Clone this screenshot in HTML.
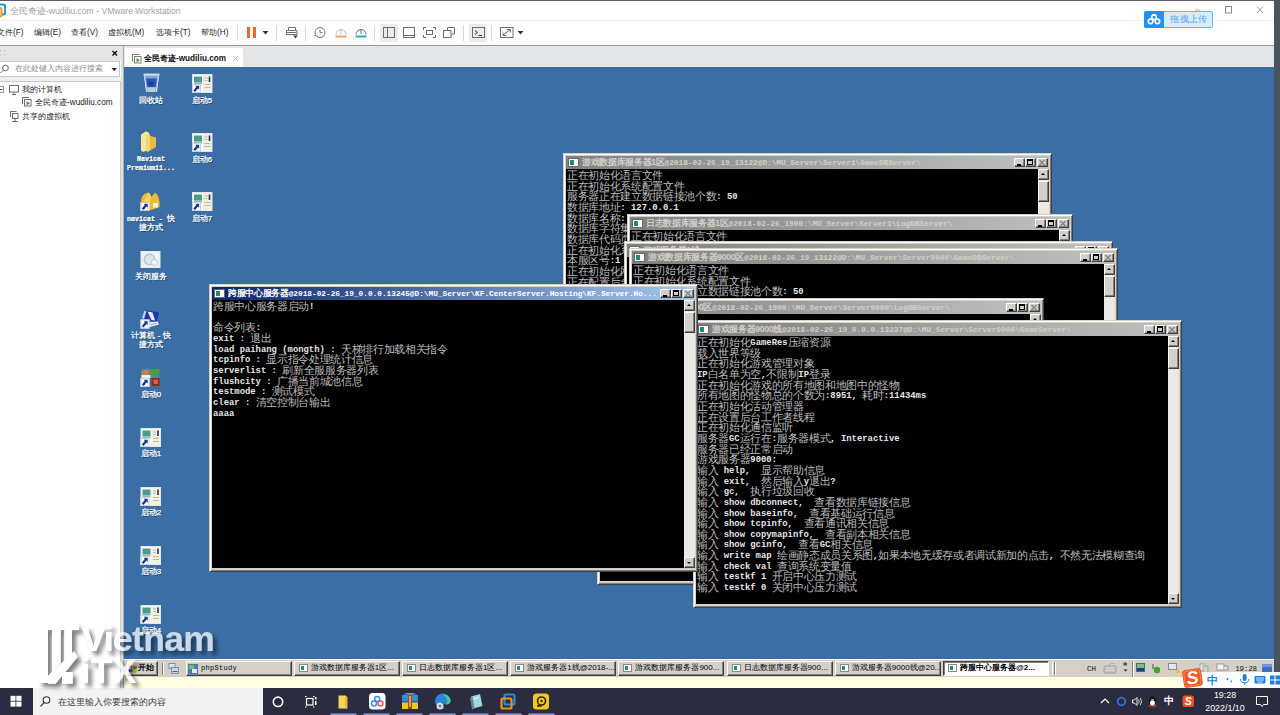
<!DOCTYPE html>
<html lang="zh">
<head>
<meta charset="utf-8">
<title>VMware Workstation</title>
<style>
*{box-sizing:border-box;margin:0;padding:0}
html,body{width:1280px;height:715px;overflow:hidden;background:#fff}
body{position:relative;font-family:"Liberation Sans",sans-serif;font-size:11px;color:#222}
.abs{position:absolute}
/* ---------- host frame ---------- */
#topline{left:0;top:0;width:1280px;height:1px;background:#5a5f66}
#rightedge{left:1274px;top:0;width:6px;height:688px;background:#4a545f}
#title{left:10px;top:3px;height:16px;line-height:16px;font-size:8.6px;color:#a3a3a3;white-space:nowrap}
#tsep{left:0;top:20px;width:1274px;height:1px;background:#f1f1f1}
.menu{top:25px;height:16px;line-height:16px;font-size:8.2px;color:#1e1e1e;white-space:nowrap}
.vsep{top:25px;width:1px;height:15px;background:#dcdcdc}
#tbline{left:0;top:45px;width:1274px;height:1px;background:#9b9b9b}
#tabrow{left:122px;top:46px;width:1152px;height:21px;background:#e4e5e7}
#tab{left:125px;top:48px;width:118px;height:19px;background:#fff;border-radius:2px 2px 0 0}
#tabtxt{left:144px;top:51px;height:15px;line-height:15px;font-size:8.2px;font-weight:bold;color:#111;white-space:nowrap}
/* ---------- sidebar ---------- */
#sbhead{left:0;top:46px;width:122px;height:15px;background:#e4e5e7}
#sbsearch{left:-1px;top:61px;width:121px;height:16px;background:#fff;border:1px solid #c9c9c9}
#sbgap{left:0;top:77px;width:122px;height:4px;background:#eeeff0}
#sbtree{left:-1px;top:81px;width:122px;height:608px;background:#fff;border:1px solid #c9c9c9}
#sbedge{left:121px;top:46px;width:3px;height:642px;background:#e1e2e4;border-right:1px solid #a9abae}
.tree{font-size:8.2px;color:#1a1a1a;height:13px;line-height:13px;white-space:nowrap}
/* ---------- guest ---------- */
#vm{left:125px;top:67px;width:1149px;height:593px;background:#3a6ea5;overflow:hidden}
#gtask{left:124px;top:659px;width:1150px;height:18px;background:#d4d0c8;border-top:1px solid #fff}
#ystrip{left:124px;top:677px;width:1150px;height:11px;background:#fffde4}
.gbtn{position:absolute;top:661px;height:15px;background:#d4d0c8;border:1px solid;border-color:#fff #404040 #404040 #fff;box-shadow:inset -1px -1px #808080;font-size:8px;line-height:12px;white-space:nowrap;overflow:hidden;color:#000;padding-left:16px}
.gbtn .gi{position:absolute;left:4px;top:2px;width:9px;height:8px;background:#fff;border:1px solid #8a8a8a}
.gbtn .gi:after{content:"";position:absolute;left:1px;top:1px;width:3px;height:4px;background:#2a8a7a}
.dic{position:absolute;width:60px;text-align:center;color:#fff;font-size:8px;line-height:9.3px;height:9.3px;white-space:nowrap;text-shadow:0.7px 0.7px 0 rgba(0,0,0,.5);-webkit-text-stroke:0.25px #fff}
.mono{font-family:"Liberation Mono",monospace;font-size:6.7px;font-weight:bold}
.dic.mono{letter-spacing:0}
/* ---------- classic console windows ---------- */
.win{position:absolute;background:#d4d0c8;border:1px solid;border-color:#d4d0c8 #404040 #404040 #d4d0c8;box-shadow:inset 1px 1px #fff,inset -1px -1px #808080}
.win .tb{position:absolute;left:2px;top:2px;right:2px;height:13px;background:linear-gradient(90deg,#808080,#c0c0c0);overflow:hidden;white-space:nowrap}
.win.act .tb{background:linear-gradient(90deg,#0a246a,#a6caf0)}
.win .ti{position:absolute;left:2px;top:2px;width:11px;height:9px;background:#fff;border:1px solid #6a6a6a}
.win .ti:after{content:"";position:absolute;left:1px;top:1px;width:4px;height:5px;background:#1f8a78}
.win .tt{position:absolute;left:16px;top:0;height:13px;line-height:13px;font-family:"Liberation Mono",monospace;font-weight:bold;font-size:7.78px;color:#d4d0c8}
.win .tt em{font-style:normal;font-family:"Liberation Sans",sans-serif;font-size:8.67px;font-weight:bold;letter-spacing:-0.33px}
.win.act .tt{color:#fff}
.win .bt{position:absolute;top:2px;width:11px;height:9px;background:#d4d0c8;border:1px solid;border-color:#fff #404040 #404040 #fff;box-shadow:inset -1px -1px #808080}
.win .bt.mn{right:24px}.win .bt.mx{right:13px}.win .bt.cl{right:1px}
.win .bt svg{position:absolute;left:-1px;top:-1px}
.win .bt.mn u{position:absolute;left:2px;top:5px;width:4px;height:1.5px;background:#000}
.win .bt.mx u{position:absolute;left:1px;top:0px;width:6px;height:6px;border:1px solid #000;border-top-width:2px}
.win .cli{position:absolute;left:2px;top:15px;right:13px;bottom:3px;background:#000;overflow:hidden}
.win .txt{position:absolute;top:1px;white-space:nowrap}
.ln{height:10.667px;line-height:10.667px;white-space:nowrap;font-size:0}
.ln i,.ln b{display:inline-block;height:10.667px;overflow:visible;vertical-align:top;white-space:nowrap}
.ln i{font-style:normal;font-size:10.667px;letter-spacing:-0.333px;color:#bdbdbd;font-family:"Liberation Sans",sans-serif;font-weight:normal}
.ln b{font-family:"Liberation Mono",monospace;font-weight:bold;font-size:8.89px;color:#e6e6e6;position:relative;top:1px}
.win .sb{position:absolute;right:2px;top:15px;width:11px;bottom:3px;background:#ebe9e4}
.win .sa{position:absolute;left:0;width:11px;height:11px;background:#d4d0c8;border:1px solid;border-color:#fff #404040 #404040 #fff;box-shadow:inset -1px -1px #808080}
.win .sa.up{top:0}.win .sa.dn{bottom:0}
.win .sa:after{content:"";position:absolute;left:2px;top:3px;border:2.5px solid transparent}
.win .sa.up:after{border-bottom-color:#000;border-top-width:0}
.win .sa.dn:after{border-top-color:#000;border-bottom-width:0;top:4px}
.win .th{position:absolute;left:0;width:11px;background:#d4d0c8;border:1px solid;border-color:#fff #404040 #404040 #fff;box-shadow:inset -1px -1px #808080}
/* ---------- host taskbar ---------- */
#htask{left:0;top:688px;width:1280px;height:27px;background:#2b2c3f}
#hsearch{left:33px;top:688px;width:230px;height:27px;background:#f3f3f3}
#hsearchtxt{left:58px;top:694px;height:16px;line-height:16px;font-size:9.4px;color:#3c3c3c;white-space:nowrap}
.hu{top:713px;height:2px;background:#8ea2d8}
.htxt{color:#fff;font-size:10.5px;white-space:nowrap;text-align:center}
</style>
</head>
<body>
<!-- host title bar -->
<div class="abs" id="title">全民奇迹-wudiliu.com - VMware Workstation</div>
<div class="abs" id="tsep"></div>
<!-- menu -->
<div class="abs menu" style="left:-3px">文件(F)</div>
<div class="abs menu" style="left:34px">编辑(E)</div>
<div class="abs menu" style="left:71px">查看(V)</div>
<div class="abs menu" style="left:108px">虚拟机(M)</div>
<div class="abs menu" style="left:156px">选项卡(T)</div>
<div class="abs menu" style="left:201px">帮助(H)</div>
<svg class="abs" style="left:230px;top:20px" width="300" height="25" viewBox="230 20 300 25" fill="none" stroke="#6e6e6e" stroke-width="1">
<g stroke="#dadada"><path d="M237.5 25V41M276.5 25V41M305.5 25V41M374.5 25V41M463.5 25V41M491.5 25V41"/></g>
<rect x="380" y="24" width="18" height="18" fill="#ebebed" stroke="none"/>
<rect x="469" y="24" width="18" height="18" fill="#ebebed" stroke="none"/>
<g stroke="none" fill="#f26522"><rect x="247" y="27" width="3" height="11"/><rect x="253" y="27" width="3" height="11"/></g>
<path d="M262.5 31h6l-3 3.5z" fill="#333" stroke="none"/>
<!-- printer-like -->
<path d="M288.5 30.5v-3h7v3M286.5 34.5v-4h10.5v4h-10.5zM286.5 32.5h10"/>
<path d="M293 35.5h5l-2.5 3z" fill="#444" stroke="none"/>
<!-- clocks -->
<circle cx="320" cy="32.5" r="5" /><path d="M320 29.5v3.2h2.6"/><path d="M314 35.5h3.5" stroke="#f08a5a"/>
<path d="M336 34.5a5 5 0 0 1 10 0" stroke="#b9b9b9"/><path d="M341 30v4" stroke="#b9b9b9"/><path d="M335.5 36.5h11" stroke="#f39a6e" stroke-width="2"/>
<path d="M356 34.5a5 5 0 0 1 10 0" stroke="#6d6d6d"/><path d="M361 30v4" stroke="#3b6fc0"/><path d="M355.5 36.5h11" stroke="#1cb3c8" stroke-width="2"/>
<!-- layout icons -->
<rect x="383.5" y="27.5" width="11" height="10"/><path d="M387.5 27.5v10"/>
<rect x="403.5" y="27.5" width="11" height="10"/><path d="M403.5 35.5h11"/>
<path d="M423.5 30v-2.5h2.5M433 27.500h2.500v2.500M435.500 35v2.500h-2.500M426 37.500h-2.500v-2.500"/><rect x="426.500" y="30.500" width="6" height="4"/>
<path d="M447.500 30.500v-3h7v6.500h-3"/><rect x="443.500" y="30.500" width="7.500" height="7"/>
<rect x="472.500" y="27.500" width="12" height="10"/><path d="M475 30.500l2.500 2l-2.500 2M478.500 35.500h3.500" stroke="#333"/>
<rect x="500.500" y="27.500" width="12.500" height="10"/><path d="M503 35l7-5M507 29.500h3.500v3M503 32.500v3h3.500"/>
<path d="M517.500 31h6l-3 3.500z" fill="#333" stroke="none"/>
</svg>

<div class="abs" id="tbline"></div>
<div class="abs" id="tabrow"></div>
<div class="abs" id="tab"></div>
<div class="abs" id="tabtxt">全民奇迹-wudiliu.com</div>
<!--TABICONS-->
<!-- sidebar -->
<div class="abs" id="sbhead"></div>
<div class="abs" id="sbgap"></div>
<div class="abs" id="sbtree"></div>
<div class="abs" id="sbsearch"></div>
<div class="abs" id="sbedge"></div>
<div class="abs" style="left:15px;top:62px;height:14px;line-height:14px;font-size:8px;color:#8d8d8d;white-space:nowrap">在此处键入内容进行搜索</div>
<div class="abs tree" style="left:22px;top:83px">我的计算机</div>
<div class="abs tree" style="left:35px;top:96px">全民奇迹-wudiliu.com</div>
<div class="abs tree" style="left:22px;top:110px">共享的虚拟机</div>
<!-- title icon (cut at left) -->
<svg class="abs" style="left:0;top:3px" width="8" height="15" viewBox="0 0 8 15">
<rect x="-6" y="1.500" width="11" height="10" rx="1.500" fill="none" stroke="#1c9ad6" stroke-width="2"/>
<rect x="-8" y="5" width="9.500" height="8.500" rx="1.500" fill="#fff" stroke="#f39a1e" stroke-width="2"/>
</svg>
<!-- window controls -->
<svg class="abs" style="left:1190px;top:3px" width="80" height="16" viewBox="1190 3 80 16" fill="none" stroke="#8a8a8a" stroke-width="1">
<rect x="1225.500" y="6.500" width="6" height="6.500"/>
<path d="M1257 6.500l6 6.500M1263 6.500l-6 6.500" stroke="#9a9a9a"/>
<path d="M1195 10.500q2.500-1.500 5 0" stroke="#b0b0b0"/>
</svg>
<!-- baidu upload widget -->
<div class="abs" style="left:1144px;top:11px;width:69px;height:17px;background:#d6edff;border:1px solid #6db6f2;border-radius:2px"></div>
<div class="abs" style="left:1144px;top:11px;width:20px;height:17px;background:#2192f2;border-radius:2px 0 0 2px"></div>
<svg class="abs" style="left:1146px;top:13px" width="16" height="13" viewBox="0 0 16 13" fill="none" stroke="#fff" stroke-width="1.600">
<circle cx="8" cy="4.200" r="2.300"/><circle cx="4.600" cy="8.300" r="2.300"/><circle cx="11.400" cy="8.300" r="2.300"/>
</svg>
<div class="abs" style="left:1166px;top:12px;width:46px;height:15px;line-height:15px;text-align:center;font-size:8.500px;color:#5aa3e6;white-space:nowrap;letter-spacing:0.300px">拖拽上传</div>
<!-- tab icon + close -->
<svg class="abs" style="left:130px;top:51px" width="116" height="16" viewBox="130 50 116 16" fill="none" stroke="#7c7c7c" stroke-width="1">
<path d="M132.500 60.500v-7h7"/><rect x="134.500" y="55.500" width="6.500" height="6.500" fill="#fff"/><path d="M136.500 57l3.500 2.200l-3.500 2.200z" fill="#3aa53a" stroke="none"/>
<path d="M233 55l5 5M238 55l-5 5" stroke="#c4c4c4"/>
</svg>
<!-- sidebar icons -->
<svg class="abs" style="left:0;top:46px" width="122" height="80" viewBox="0 46 122 80" fill="none" stroke="#6e6e6e" stroke-width="1">
<g fill="#c9c9c9" stroke="none"><rect x="0" y="50" width="1.500" height="1.500"/><rect x="4" y="50" width="1.500" height="1.500"/><rect x="0" y="54" width="1.500" height="1.500"/><rect x="4" y="54" width="1.500" height="1.500"/></g>
<path d="M112.500 51l4.500 4.500M117 51l-4.500 4.500" stroke="#111" stroke-width="1.400"/>
<circle cx="5.500" cy="68" r="2.800" stroke="#666"/><path d="M3.500 70l-3 3" stroke="#666"/>
<path d="M111.500 68h5.500l-2.750 3z" fill="#222" stroke="none"/>
<rect x="-2.500" y="86.500" width="6" height="6" stroke="#9a9a9a"/><path d="M-1 89.500h3.500" stroke="#555"/>
<rect x="9.500" y="85.500" width="9" height="6.500"/><path d="M12 94.500h4M14 92v2.500"/>
<path d="M22.500 104v-6.500h6.500"/><rect x="24.500" y="99.500" width="6.500" height="6.500" fill="#fff"/><path d="M26.500 101l3.500 2.200l-3.500 2.200z" fill="#3aa53a" stroke="none"/>
<path d="M10.500 117v-5.500h6"/><rect x="12.500" y="113.500" width="5.500" height="5" fill="#fff"/><path d="M12 121.500h6M15 118.500v3"/>
</svg>

<!-- guest desktop -->
<div class="abs" id="vm">
<svg class="abs" style="left:0;top:0" width="120" height="594" viewBox="125 67 120 594">
<defs>
<g id="sc"><rect x="0" y="0" width="9" height="9" fill="#fff"/><rect x="0.500" y="0.500" width="8" height="8" fill="none" stroke="#c9d2dc" stroke-width="1"/><path d="M2.200 7.300L5.500 3.200" stroke="#17348c" stroke-width="2.200" fill="none"/><path d="M3.200 1.800h4v4z" fill="#17348c"/></g>
<g id="bat">
<rect x="0" y="0" width="20.500" height="19" fill="#dfe7ee"/>
<rect x="1" y="1" width="10" height="17" fill="#fbfcfd"/>
<rect x="2" y="2.500" width="8" height="6" fill="#4b9a8c"/>
<rect x="2" y="8.500" width="8" height="2" fill="#8fbfb6"/>
<rect x="11.500" y="1" width="8" height="17" fill="#f3f0de"/>
<rect x="16.700" y="2.500" width="1.600" height="5.500" fill="#22365a"/>
<path d="M12.500 4h3M12.500 6.500h3M12.500 10.500h6M12.500 13.500h6" stroke="#bdbba8" stroke-width="1"/>
<use href="#sc" x="0" y="10"/>
</g>
</defs>

<g transform="translate(143.500 73.500)">
<path d="M0.300 1.500L15.700 1.500L13.200 18.500L2.800 18.500Z" fill="#7aa3d4"/>
<path d="M0 0h16v2.300h-16z" fill="#c8d8e8"/>
<path d="M2.600 5L13.400 5L12.300 13.500L3.700 13.500z" fill="#2b58b6"/>
<path d="M5 8h5.500l-.5 4h-4.500z" fill="#1c3f9a"/>
<path d="M3.700 14h8.600l-.6 4.500h-7.400z" fill="#bccbd6"/>
<path d="M1 2.300l2 16M15 2.300l-2 16" stroke="#dbe7f2" stroke-width="1" fill="none"/>
</g>
<g transform="translate(140.500 131)">
<path d="M0.500 3.500L5.500 0.300L8.500 1.800L8.500 18.500L2.500 21L0.500 19.500z" fill="#f8e69a"/>
<path d="M6 4L15.500 6.500L15.500 16L7 21L6 20z" fill="#e8bb43"/>
<path d="M6 4L9.500 3L9.500 19.500L6 20.500z" fill="#f4d56e"/>
</g>
<g transform="translate(140.500 192)">
<path d="M0.500 10C0.500 4 4 0.500 8.500 0.500L11 5L14.500 0.500C18 3 19.500 8 19 15L11 18L0.500 15z" fill="#efb92f"/>
<path d="M8.500 0.500L11 5L9 12L3 9z" fill="#f6d25e"/>
<rect x="12.500" y="11" width="5" height="4.500" fill="#fff7d8"/>
<use href="#sc" x="0" y="10"/>
</g>
<g transform="translate(140.500 251)">
<rect x="0" y="0" width="20" height="17" fill="#e3e9ed"/>
<rect x="1" y="1" width="18" height="15" fill="#eef2f4"/>
<circle cx="9" cy="8.500" r="5.200" fill="#dbe7ef" stroke="#b5c7d4" stroke-width="1.500"/>
<circle cx="14" cy="11.500" r="3" fill="#f5f7f8" stroke="#b9c4cc" stroke-width="1"/>
</g>
<g transform="translate(140.500 309)">
<path d="M5 1L18.500 3.500L16 13L3.500 10z" fill="#1b37b4"/>
<path d="M7 2.500L12 3.500L14.500 11.500L11 11z" fill="#e6eefc"/>
<path d="M4 1.800l-2.500 7 2 1.500L6 2z" fill="#c7d2e2"/>
<path d="M8 13.500l9-1 1.500 3-9 2.500z" fill="#eef1f4"/>
<path d="M10 15.500l6-1" stroke="#9aa5b5" stroke-width="1"/>
<use href="#sc" x="0" y="10.500"/>
</g>
<g transform="translate(140.500 368)">
<rect x="1" y="1" width="18" height="9" fill="#5b7fb0"/>
<path d="M9 1.500L19 0.500L18 8.500L9 9z" fill="#4e9c42"/>
<path d="M1 3l7-1.500v6L1 9z" fill="#d98a2e" opacity="0.800"/>
<rect x="1" y="7" width="9" height="3" fill="#e9eef2"/>
<rect x="11" y="10" width="8" height="8" fill="#8b2a22"/>
<rect x="13" y="11.500" width="4.500" height="4.500" fill="#e2573a"/>
<use href="#sc" x="0" y="10"/>
</g>
<use href="#bat" x="140.500" y="428"/>
<use href="#bat" x="140.500" y="487"/>
<use href="#bat" x="140.500" y="546"/>
<use href="#bat" x="140.500" y="605"/>
<use href="#bat" x="192" y="74"/>
<use href="#bat" x="192" y="133"/>
<use href="#bat" x="192" y="192"/>
</svg>
<div class="dic" style="left:-4px;top:28.5px">回收站</div>
<div class="dic mono" style="left:-4px;top:88.0px">Navicat</div>
<div class="dic mono" style="left:-4px;top:97.3px">Premium11...</div>
<div class="dic" style="left:-4px;top:147.0px"><span class="mono">navicat - </span>快</div>
<div class="dic" style="left:-4px;top:156.3px">捷方式</div>
<div class="dic" style="left:-4px;top:205.0px">关闭服务</div>
<div class="dic" style="left:-4px;top:264.0px">计算机 <span class="mono">-</span> 快</div>
<div class="dic" style="left:-4px;top:273.3px">捷方式</div>
<div class="dic" style="left:-4px;top:323.0px">启动0</div>
<div class="dic" style="left:-4px;top:382.0px">启动1</div>
<div class="dic" style="left:-4px;top:441.0px">启动2</div>
<div class="dic" style="left:-4px;top:500.0px">启动3</div>
<div class="dic" style="left:-4px;top:559.0px">启动4</div>
<div class="dic" style="left:47px;top:28.5px">启动5</div>
<div class="dic" style="left:47px;top:88.0px">启动6</div>
<div class="dic" style="left:47px;top:147.0px">启动7</div>
</div>
<div class="abs" style="left:0;top:0;width:0;height:0">
<div class="win" style="left:563px;top:153px;width:489px;height:288px;z-index:1">
<div class="tb"><span class="ti"></span><span class="tt"><em>游戏数据库服务器1区</em>@2018-02-26_19_13122@D:\MU_Server\Server1\GameDBServer\</span><span class="bt mn"><u></u></span><span class="bt mx"><u></u></span><span class="bt cl"><svg width="10" height="9" viewBox="0 0 10 9"><path d="M2.5 2 L7.5 7 M7.5 2 L2.5 7" stroke="#808080" stroke-width="1.2"/></svg></span></div>
<div class="cli"><div class="txt" style="left:1px">
<div class="ln"><i style="width:96.00px">正在初始化语言文件</i></div>
<div class="ln"><i style="width:117.34px">正在初始化系统配置文件</i></div>
<div class="ln"><i style="width:149.34px">服务器正在建立数据链接池个数</i><b style="width:21.33px">:&nbsp;50</b></div>
<div class="ln"><i style="width:53.34px">数据库地址</i><b style="width:58.67px">:&nbsp;127.0.0.1</b></div>
<div class="ln"><i style="width:53.34px">数据库名称</i><b style="width:58.67px">:&nbsp;mu_game_1</b></div>
<div class="ln"><i style="width:64.00px">数据库字符集</i><b style="width:32.00px">:&nbsp;utf8</b></div>
<div class="ln"><i style="width:64.00px">数据库代码页</i><b style="width:37.33px">:&nbsp;65001</b></div>
<div class="ln"><i style="width:96.00px">正在初始化系统参数</i></div>
<div class="ln"><i style="width:42.67px">本服区号</i><b style="width:10.67px">:1</b></div>
<div class="ln"><i style="width:74.67px">正在初始化网络</i></div>
<div class="ln"><i style="width:85.34px">正在配置后台线程</i></div>
<div class="ln"><i style="width:42.67px">正在启动</i></div>
</div></div>
<div class="sb"><span class="sa up"></span><span class="th" style="top:12px;height:21px"></span><span class="sa dn"></span></div>
</div>
<div class="win" style="left:627px;top:214px;width:446px;height:288px;z-index:2">
<div class="tb"><span class="ti"></span><span class="tt"><em>日志数据库服务器1区</em>@2018-02-26_1900:\MU_Server\Server1\LogDBServer\</span><span class="bt mn"><u></u></span><span class="bt mx"><u></u></span><span class="bt cl"><svg width="10" height="9" viewBox="0 0 10 9"><path d="M2.5 2 L7.5 7 M7.5 2 L2.5 7" stroke="#808080" stroke-width="1.2"/></svg></span></div>
<div class="cli"><div class="txt" style="left:1px">
<div class="ln"><i style="width:96.00px">正在初始化语言文件</i></div>
<div class="ln"><i style="width:117.34px">正在初始化系统配置文件</i></div>
</div></div>
<div class="sb"><span class="sa up"></span><span class="th" style="top:12px;height:21px"></span><span class="sa dn"></span></div>
</div>
<div class="win" style="left:624px;top:241px;width:489px;height:288px;z-index:3">
<div class="tb"><span class="ti"></span><span class="tt"><em>游戏服务器1线</em>@2018-02-26_19_0.0.0.13231@D:\MU_Server\Server1\GameServer\</span><span class="bt mn"><u></u></span><span class="bt mx"><u></u></span><span class="bt cl"><svg width="10" height="9" viewBox="0 0 10 9"><path d="M2.5 2 L7.5 7 M7.5 2 L2.5 7" stroke="#808080" stroke-width="1.2"/></svg></span></div>
<div class="cli"><div class="txt" style="left:1px">
</div></div>
<div class="sb"><span class="sa up"></span><span class="th" style="top:12px;height:21px"></span><span class="sa dn"></span></div>
</div>
<div class="win" style="left:629px;top:248px;width:489px;height:288px;z-index:4">
<div class="tb"><span class="ti"></span><span class="tt"><em>游戏数据库服务器9000区</em>@2018-02-26_19_13122@D:\MU_Server\Server9000\GameDBServer\</span><span class="bt mn"><u></u></span><span class="bt mx"><u></u></span><span class="bt cl"><svg width="10" height="9" viewBox="0 0 10 9"><path d="M2.5 2 L7.5 7 M7.5 2 L2.5 7" stroke="#808080" stroke-width="1.2"/></svg></span></div>
<div class="cli"><div class="txt" style="left:1px">
<div class="ln"><i style="width:96.00px">正在初始化语言文件</i></div>
<div class="ln"><i style="width:117.34px">正在初始化系统配置文件</i></div>
<div class="ln"><i style="width:149.34px">服务器正在建立数据链接池个数</i><b style="width:21.33px">:&nbsp;50</b></div>
<div class="ln"><i style="width:53.34px">数据库地址</i><b style="width:58.67px">:&nbsp;127.0.0.1</b></div>
</div></div>
<div class="sb"><span class="sa up"></span><span class="th" style="top:12px;height:21px"></span><span class="sa dn"></span></div>
</div>
<div class="win" style="left:597px;top:298px;width:447px;height:287px;z-index:5">
<div class="tb"><span class="ti"></span><span class="tt"><em>日志数据库服务器9000区</em>@2018-02-26_1900:\MU_Server\Server9000\LogDBServer\</span><span class="bt mn"><u></u></span><span class="bt mx"><u></u></span><span class="bt cl"><svg width="10" height="9" viewBox="0 0 10 9"><path d="M2.5 2 L7.5 7 M7.5 2 L2.5 7" stroke="#808080" stroke-width="1.2"/></svg></span></div>
<div class="cli"><div class="txt" style="left:1px">
<div class="ln"><i style="width:96.00px">正在初始化语言文件</i></div>
</div></div>
<div class="sb"><span class="sa up"></span><span class="th" style="top:12px;height:21px"></span><span class="sa dn"></span></div>
</div>
<div class="win" style="left:693px;top:320px;width:489px;height:288px;z-index:6">
<div class="tb"><span class="ti"></span><span class="tt"><em>游戏服务器9000线</em>@2018-02-26_19_0.0.0.13237@D:\MU_Server\Server9000\GameServer\</span><span class="bt mn"><u></u></span><span class="bt mx"><u></u></span><span class="bt cl"><svg width="10" height="9" viewBox="0 0 10 9"><path d="M2.5 2 L7.5 7 M7.5 2 L2.5 7" stroke="#808080" stroke-width="1.2"/></svg></span></div>
<div class="cli"><div class="txt" style="left:1px">
<div class="ln"><i style="width:53.34px">正在初始化</i><b style="width:37.33px">GameRes</b><i style="width:42.67px">压缩资源</i></div>
<div class="ln"><i style="width:64.00px">载入世界等级</i></div>
<div class="ln"><i style="width:117.34px">正在初始化游戏管理对象</i></div>
<div class="ln"><b style="width:10.67px">IP</b><i style="width:53.34px">白名单为空</i><b style="width:5.33px">,</b><i style="width:32.00px">不限制</i><b style="width:10.67px">IP</b><i style="width:21.33px">登录</i></div>
<div class="ln"><i style="width:202.67px">正在初始化游戏的所有地图和地图中的怪物</i></div>
<div class="ln"><i style="width:128.00px">所有地图的怪物总的个数为</i><b style="width:37.33px">:8951,&nbsp;</b><i style="width:21.33px">耗时</i><b style="width:42.67px">:11434ms</b></div>
<div class="ln"><i style="width:106.67px">正在初始化活动管理器</i></div>
<div class="ln"><i style="width:117.34px">正在设置后台工作者线程</i></div>
<div class="ln"><i style="width:96.00px">正在初始化通信监听</i></div>
<div class="ln"><i style="width:32.00px">服务器</i><b style="width:10.67px">GC</b><i style="width:32.00px">运行在</i><b style="width:5.33px">:</b><i style="width:53.34px">服务器模式</i><b style="width:69.34px">,&nbsp;Interactive</b></div>
<div class="ln"><i style="width:96.00px">服务器已经正常启动</i></div>
<div class="ln"><i style="width:53.34px">游戏服务器</i><b style="width:26.67px">9000:</b></div>
<div class="ln"><i style="width:21.33px">输入</i><b style="width:42.67px">&nbsp;help,&nbsp;&nbsp;</b><i style="width:64.00px">显示帮助信息</i></div>
<div class="ln"><i style="width:21.33px">输入</i><b style="width:42.67px">&nbsp;exit,&nbsp;&nbsp;</b><i style="width:42.67px">然后输入</i><b style="width:5.33px">y</b><i style="width:21.33px">退出</i><b style="width:5.33px">?</b></div>
<div class="ln"><i style="width:21.33px">输入</i><b style="width:32.00px">&nbsp;gc,&nbsp;&nbsp;</b><i style="width:64.00px">执行垃圾回收</i></div>
<div class="ln"><i style="width:21.33px">输入</i><b style="width:96.00px">&nbsp;show&nbsp;dbconnect,&nbsp;&nbsp;</b><i style="width:96.00px">查看数据库链接信息</i></div>
<div class="ln"><i style="width:21.33px">输入</i><b style="width:90.67px">&nbsp;show&nbsp;baseinfo,&nbsp;&nbsp;</b><i style="width:85.34px">查看基础运行信息</i></div>
<div class="ln"><i style="width:21.33px">输入</i><b style="width:85.34px">&nbsp;show&nbsp;tcpinfo,&nbsp;&nbsp;</b><i style="width:85.34px">查看通讯相关信息</i></div>
<div class="ln"><i style="width:21.33px">输入</i><b style="width:106.67px">&nbsp;show&nbsp;copymapinfo,&nbsp;&nbsp;</b><i style="width:85.34px">查看副本相关信息</i></div>
<div class="ln"><i style="width:21.33px">输入</i><b style="width:80.00px">&nbsp;show&nbsp;gcinfo,&nbsp;&nbsp;</b><i style="width:21.33px">查看</i><b style="width:10.67px">GC</b><i style="width:42.67px">相关信息</i></div>
<div class="ln"><i style="width:21.33px">输入</i><b style="width:58.67px">&nbsp;write&nbsp;map&nbsp;</b><i style="width:96.00px">绘画静态成员关系图</i><b style="width:5.33px">,</b><i style="width:170.67px">如果本地无缓存或者调试新加的点击</i><b style="width:10.67px">,&nbsp;</b><i style="width:85.34px">不然无法模糊查询</i></div>
<div class="ln"><i style="width:21.33px">输入</i><b style="width:58.67px">&nbsp;check&nbsp;val&nbsp;</b><i style="width:74.67px">查询系统变量值</i></div>
<div class="ln"><i style="width:21.33px">输入</i><b style="width:53.34px">&nbsp;testkf&nbsp;1&nbsp;</b><i style="width:85.34px">开启中心压力测试</i></div>
<div class="ln"><i style="width:21.33px">输入</i><b style="width:53.34px">&nbsp;testkf&nbsp;0&nbsp;</b><i style="width:85.34px">关闭中心压力测试</i></div>
</div></div>
<div class="sb"><span class="sa up"></span><span class="th" style="top:12px;height:21px"></span><span class="sa dn"></span></div>
</div>
<div class="win act" style="left:209px;top:284px;width:489px;height:288px;z-index:7">
<div class="tb"><span class="ti"></span><span class="tt"><em>跨服中心服务器</em>@2018-02-26_19_0.0.0.13245@D:\MU_Server\KF.CenterServer.Hosting\KF.Server.Ho...</span><span class="bt mn"><u></u></span><span class="bt mx"><u></u></span><span class="bt cl"><svg width="10" height="9" viewBox="0 0 10 9"><path d="M2.5 2 L7.5 7 M7.5 2 L2.5 7" stroke="#808080" stroke-width="1.2"/></svg></span></div>
<div class="cli"><div class="txt" style="left:1px">
<div class="ln"><i style="width:96.00px">跨服中心服务器启动</i><b style="width:5.33px">!</b></div>
<div class="ln">&nbsp;</div>
<div class="ln"><i style="width:42.67px">命令列表</i><b style="width:5.33px">:</b></div>
<div class="ln"><b style="width:37.33px">exit&nbsp;:&nbsp;</b><i style="width:21.33px">退出</i></div>
<div class="ln"><b style="width:128.00px">load&nbsp;paihang&nbsp;(mongth)&nbsp;:&nbsp;</b><i style="width:106.67px">天梯排行加载相关指令</i></div>
<div class="ln"><b style="width:53.34px">tcpinfo&nbsp;:&nbsp;</b><i style="width:106.67px">显示指令处理统计信息</i></div>
<div class="ln"><b style="width:69.34px">serverlist&nbsp;:&nbsp;</b><i style="width:96.00px">刷新全服服务器列表</i></div>
<div class="ln"><b style="width:64.00px">flushcity&nbsp;:&nbsp;</b><i style="width:85.34px">广播当前城池信息</i></div>
<div class="ln"><b style="width:58.67px">testmode&nbsp;:&nbsp;</b><i style="width:42.67px">测试模式</i></div>
<div class="ln"><b style="width:42.67px">clear&nbsp;:&nbsp;</b><i style="width:74.67px">清空控制台输出</i></div>
<div class="ln"><b style="width:21.33px">aaaa</b></div>
</div></div>
<div class="sb"><span class="sa up"></span><span class="th" style="top:12px;height:21px"></span><span class="sa dn"></span></div>
</div>
</div>
<div class="abs" style="left:124px;top:67px;width:1px;height:593px;background:#3a6ea5"></div>
<div class="abs" id="gtask"></div>
<div class="abs gbtn" style="left:127px;width:31px;padding-left:10px;font-weight:bold;font-size:8px">开始</div>
<svg class="abs" style="left:128px;top:663px" width="10" height="11" viewBox="0 0 10 11">
<path d="M1 2.500q2-1 3.500 0v3q-1.500-1-3.500 0z" fill="#e5532a"/><path d="M5 2.700q2 1 3.800 0v3q-1.800 1-3.800 0z" fill="#5aa02c"/>
<path d="M1 6.200q2-1 3.500 0v3q-1.500-1-3.500 0z" fill="#2a66c8"/><path d="M5 6.400q2 1 3.800 0v3q-1.800 1-3.800 0z" fill="#efb71b"/></svg>
<div class="abs" style="left:162px;top:663px;width:2px;height:12px;border-left:1px solid #808080;border-right:1px solid #fff"></div>
<svg class="abs" style="left:168px;top:663px" width="12" height="12" viewBox="0 0 12 12">
<rect x="1" y="0.500" width="6" height="5" fill="#dfe6ef" stroke="#6f7f95" stroke-width="0.800"/><rect x="3.500" y="4.500" width="7" height="6" fill="#c9d4e3" stroke="#6f7f95" stroke-width="0.800"/><rect x="4.500" y="8" width="5" height="1" fill="#3f66ad"/></svg>
<div class="abs gbtn" style="left:186px;width:106px;padding-left:14px"><span class="mono" style="font-size:7px;font-weight:normal;letter-spacing:0.300px">phpStudy</span></div>
<svg class="abs" style="left:188px;top:664px" width="10" height="10" viewBox="0 0 10 10"><rect x="0" y="0" width="10" height="10" fill="#4d78c0"/><rect x="1" y="1" width="5" height="4" fill="#7fbf5a"/><rect x="4" y="5" width="5" height="4" fill="#e8e8f0"/></svg>
<div class="abs gbtn" style="left:293.8px;width:106px"><span class="gi"></span>游戏数据库服务器1区...</div>
<div class="abs gbtn" style="left:402.0px;width:106px"><span class="gi"></span>日志数据库服务器1区...</div>
<div class="abs gbtn" style="left:510.2px;width:106px"><span class="gi"></span>游戏服务器1线@2018-...</div>
<div class="abs gbtn" style="left:618.4px;width:106px"><span class="gi"></span>游戏数据库服务器900...</div>
<div class="abs gbtn" style="left:726.6px;width:106px"><span class="gi"></span>日志数据库服务器900...</div>
<div class="abs gbtn" style="left:834.8px;width:106px"><span class="gi"></span>游戏服务器9000线@20...</div>
<div class="abs gbtn" style="left:943.0px;width:106px;background:#fff;border-color:#404040 #fff #fff #404040;box-shadow:inset 1px 1px #808080;font-weight:bold"><span class="gi"></span>跨服中心服务器@2...</div>
<div class="abs" style="left:1087px;top:662px;height:14px;line-height:14px;font-size:7.500px;font-family:'Liberation Mono',monospace;color:#111">CH</div>
<svg class="abs" style="left:1100px;top:660px" width="174" height="17" viewBox="1100 660 174 17">
<rect x="1104" y="666" width="12" height="7" rx="1" fill="#c2c2c2" stroke="#9a9a9a" stroke-width="0.800"/><path d="M1106 668h8M1106 670.500h8" stroke="#e6e6e6" stroke-width="0.800"/><path d="M1108 666l3-2.500h4" stroke="#aaa" fill="none" stroke-width="0.800"/>
<rect x="1123.500" y="662.500" width="3.500" height="3" fill="#555"/><path d="M1123.500 669.500h4l-2 2z" fill="#222"/>
<path d="M1132.500 661v16" stroke="#808080" stroke-width="1"/><path d="M1133.500 661v16" stroke="#fff" stroke-width="1"/>
<rect x="1136" y="663" width="9" height="9" fill="#3a6aa8"/><rect x="1137" y="664" width="7" height="4" fill="#7fc06a"/><rect x="1137" y="668" width="7" height="3" fill="#28406e"/>
<path d="M1153 664v5" stroke="#777" stroke-width="1.500"/><circle cx="1157" cy="670" r="3.200" fill="#3ea52c"/>
<rect x="1168" y="663" width="9" height="7" fill="#8b8b8b"/><rect x="1169" y="664" width="7" height="5" fill="#dfe8ef"/><path d="M1175 673l3-5 3 5z" fill="#f2c21a"/>
<rect x="1200" y="664" width="5" height="7" fill="#e8e8e8" stroke="#999" stroke-width="0.800"/><rect x="1203" y="666" width="5" height="7" fill="#c9d6c0" stroke="#999" stroke-width="0.800"/>
<rect x="1217" y="664" width="7" height="6" fill="#f4f4f4" stroke="#888" stroke-width="0.800"/><path d="M1224 666h4v4h-4" fill="#ddd" stroke="#888" stroke-width="0.800"/>
<rect x="1262" y="664" width="10" height="9" fill="#3f6fc4"/><rect x="1262" y="664" width="10" height="3" fill="#6d97de"/>
</svg>
<div class="abs" style="left:1234px;top:662px;width:24px;height:14px;line-height:14px;text-align:center;font-size:7.500px;font-family:'Liberation Mono',monospace;color:#111;letter-spacing:-0.200px">19:28</div>
<div class="abs" style="left:1052px;top:662px;width:4px;height:13px;border-left:1px solid #fff;border-right:1px solid #fff;background:linear-gradient(90deg,#d4d0c8 0,#d4d0c8 1px,#808080 1px,#808080 2px)"></div>
<div class="abs" id="ystrip"></div>
<!-- host taskbar -->
<div class="abs" id="htask"></div>
<div class="abs" id="hsearch"></div>
<div class="abs" id="hsearchtxt">在这里输入你要搜索的内容</div>
<svg class="abs" style="left:30px;top:610px" width="200" height="84" viewBox="30 610 200 84">
<defs><filter id="wsh" x="-10%" y="-10%" width="130%" height="140%">
<feGaussianBlur in="SourceAlpha" stdDeviation="1.900" result="b"/><feOffset in="b" dx="3.500" dy="3.500" result="o"/>
<feFlood flood-color="#000" flood-opacity="0.500"/><feComposite in2="o" operator="in" result="sh"/>
<feComposite in="sh" in2="SourceAlpha" operator="out" result="sho"/>
<feColorMatrix in="SourceGraphic" type="matrix" values="1 0 0 0 0 0 1 0 0 0 0 0 1 0 0 0 0 0 0.730 0" result="sg"/>
<feMerge><feMergeNode in="sho"/><feMergeNode in="sg"/></feMerge></filter></defs>
<g filter="url(#wsh)" fill="#fff">
<path d="M38 624.500h41v5.500h-41z"/>
<path d="M38.500 630h9.500v53h-9.500z"/>
<path d="M52 630h8.500v33.500l-8.500 8z"/>
<path d="M64.500 630h7.500v27l-7.500 7z"/>
<path d="M48 676l26-24.500l3.500 5.500l-22 26.500h-7.500z"/>
<path d="M62 672h10.500v11.500h-10.500z"/>
<text x="81.500" y="650.600" font-family="Liberation Sans, sans-serif" font-weight="bold" font-size="35.500" letter-spacing="-0.700">Vietnam</text>
<text x="80.500" y="683.400" font-family="Liberation Sans, sans-serif" font-weight="bold" font-size="35" letter-spacing="0.600">iTX</text>
</g>
</svg>

<div class="abs" id="topline"></div>
<div class="abs" id="rightedge"></div>
<svg class="abs" style="left:0;top:688px" width="1280" height="27" viewBox="0 688 1280 27">
<!-- start logo -->
<g fill="#fff"><rect x="10.500" y="695.800" width="5" height="5"/><rect x="16.300" y="695.800" width="5.200" height="5"/><rect x="10.500" y="701.600" width="5" height="5"/><rect x="16.300" y="701.600" width="5.200" height="5"/></g>
<!-- search magnifier -->
<circle cx="46.500" cy="700" r="3.300" fill="none" stroke="#333" stroke-width="1.100"/><path d="M44.200 702.500l-3.700 3.800" stroke="#333" stroke-width="1.200"/>
<!-- cortana -->
<circle cx="278" cy="701.800" r="4.700" fill="none" stroke="#fff" stroke-width="1.600"/>
<!-- task view -->
<g fill="none" stroke="#fff" stroke-width="1.200"><rect x="306.500" y="698.500" width="6.500" height="6.500"/><path d="M305 696.500h1.500M313 696.500h1.500M305 707h1.500M313 707h1.500"/></g><g fill="#fff"><rect x="315" y="697" width="1.500" height="2.500"/><rect x="315" y="701" width="1.500" height="4"/></g>
<!-- folder -->
<path d="M338.500 695.500h7l1.500 1.500v11.500h-8.500z" fill="#f6d458"/><path d="M345 697h2.500v11.500h-2.500z" fill="#e2b63a"/>
<!-- baidu netdisk -->
<rect x="369" y="693" width="16.500" height="16.500" rx="3.500" fill="#fff"/>
<g fill="none" stroke-width="1.500"><circle cx="377.200" cy="699" r="2.500" stroke="#3c8df5"/><circle cx="374" cy="703.500" r="2.500" stroke="#3c8df5"/><circle cx="380.500" cy="703.500" r="2.500" stroke="#ef5a5a"/></g>
<!-- winrar -->
<rect x="402" y="695" width="16" height="7" fill="#2f8fd8"/><rect x="402" y="702" width="16" height="7" fill="#e8c72c"/><rect x="402" y="701" width="16" height="1.500" fill="#2b5f9a"/><rect x="408" y="694" width="4" height="15" fill="#a8481c"/><rect x="409" y="696" width="2" height="11" fill="#e0a050"/><path d="M403 694.500l4-1.500h6l4 1.500z" fill="#5aa9e6"/>
<!-- edge -->
<path d="M435 702a7.800 7.800 0 0 1 15.600-1.500c0 3-2.500 4-5 4c-2 0-3-1-3-2.200c-2 0-3.500 1.500-3 4.500c-3-1-4.600-3-4.600-4.800z" fill="#2a86d8"/><path d="M442.500 694.200a7.800 7.800 0 0 1 8.100 6.300c0 3-2.500 4-5 4c3-2 2-7-3.100-10.300z" fill="#3fcf8a"/><path d="M436 704c1 4 6 6.500 11 4c-3 .5-6-1-6.500-3.500z" fill="#1a5fb0"/><circle cx="440" cy="706" r="3.500" fill="#d9dde2"/><circle cx="440" cy="706" r="1.500" fill="#7a8694"/>
<!-- notepad like -->
<path d="M471 696.500l9-2.500 2.500 12-9.500 2.500z" fill="#9ed6e2"/><path d="M470 698l2.500-1.500 2 12-2.500 1z" fill="#5d8a96"/><path d="M473 699l6-1.500" stroke="#e8f6fa" stroke-width="1"/>
<!-- vmware -->
<rect x="504.500" y="694.500" width="10" height="10" rx="1.500" fill="none" stroke="#1e90dc" stroke-width="2.200"/><rect x="501.500" y="698.500" width="10" height="10" rx="1.500" fill="none" stroke="#f4901e" stroke-width="2.200"/>
<!-- yellow app -->
<rect x="533" y="693.500" width="16" height="16" rx="3.500" fill="#f3c71f"/><circle cx="541.500" cy="701" r="4" fill="none" stroke="#2a2410" stroke-width="1.600"/><circle cx="541.500" cy="701" r="1.200" fill="#2a2410"/><path d="M537 706h4.500" stroke="#2a2410" stroke-width="1.600"/>
<!-- running underlines -->
<g fill="#8fa3d9"><rect x="330.500" y="713.500" width="26" height="1.500"/><rect x="363.500" y="713.500" width="26" height="1.500"/><rect x="396.500" y="713.500" width="26" height="1.500"/><rect x="429.500" y="713.500" width="26" height="1.500"/><rect x="462.500" y="713.500" width="26" height="1.500"/><rect x="495.500" y="713.500" width="26" height="1.500"/><rect x="528.500" y="713.500" width="26" height="1.500"/></g>
<!-- tray -->
<path d="M1101 703l4-4 4 4" fill="none" stroke="#fff" stroke-width="1.200"/>
<circle cx="1121.500" cy="701.500" r="3.800" fill="none" stroke="#3b6fe0" stroke-width="1.800"/>
<path d="M1132.500 700h2l2.500-2.500v8l-2.500-2.500h-2z" fill="none" stroke="#fff" stroke-width="0.900"/><path d="M1138.500 699.500q1.500 2 0 4M1140.300 698q2.500 3.500 0 7" fill="none" stroke="#fff" stroke-width="0.800"/>
<ellipse cx="1152.500" cy="701" rx="3.600" ry="4.800" fill="#15151c"/><ellipse cx="1152.500" cy="703" rx="2.400" ry="2.800" fill="#fff"/><path d="M1148.500 704.500q4 2.500 8 0l-1 2.300h-6z" fill="#e23a2a"/><path d="M1151 699.800h3" stroke="#f2b01e" stroke-width="1.200"/>
<rect x="1182.500" y="695.500" width="11.500" height="11.500" rx="2.500" fill="#f0501f"/>
<path d="M1256.500 696.500h11v8h-4l-1.500 2-1.500-2h-4z" fill="none" stroke="#fff" stroke-width="1"/>
</svg>
<div class="abs htxt" style="left:1161px;top:694px;width:16px;height:14px;line-height:14px;font-size:9.500px;font-weight:bold">中</div>
<div class="abs htxt" style="left:1182.500px;top:694.500px;width:11.500px;height:13px;line-height:13px;font-size:10.500px;font-weight:bold;font-style:italic">S</div>
<div class="abs htxt" style="left:1200px;top:689px;width:50px;height:13px;line-height:13px;font-size:8.900px">19:28</div>
<div class="abs htxt" style="left:1200px;top:701.500px;width:50px;height:13px;line-height:13px;font-size:8.900px">2022/1/10</div>
<div class="abs" style="left:1190px;top:672px;width:90px;height:16px;background:#fff"></div>
<svg class="abs" style="left:1176px;top:664px" width="104" height="28" viewBox="1176 664 104 28">
<g transform="rotate(-9 1192.500 678)"><rect x="1183" y="669" width="19" height="18" rx="3.500" fill="#f2541f"/><rect x="1184.500" y="670.500" width="16" height="15" rx="2.500" fill="none" stroke="#f9a480" stroke-width="0.600"/></g>
<g fill="#1b7fe0"><circle cx="1227.500" cy="679" r="1"/><path d="M1230.500 680.500l1.800 0l-1 2.500z"/>
<rect x="1242.700" y="674" width="4" height="7" rx="2"/><path d="M1240.500 679q0 3.800 4.200 3.800q4.200 0 4.200-3.800" fill="none" stroke="#1b7fe0" stroke-width="1"/><rect x="1244.200" y="682.500" width="1" height="2.500"/>
<rect x="1254.500" y="676" width="11" height="7.500" rx="1"/><path d="M1256 678h8M1256 680h8M1257.500 682h5" stroke="#fff" stroke-width="0.800"/>
<rect x="1270" y="675.500" width="4.500" height="4"/><rect x="1275.500" y="675.500" width="4.500" height="4"/><rect x="1270" y="680.500" width="4.500" height="4"/><rect x="1275.500" y="680.500" width="4.500" height="4"/></g>
</svg>
<div class="abs" style="left:1183px;top:667.500px;width:19px;height:21px;line-height:21px;text-align:center;color:#fff;font-size:18px;font-weight:bold;font-style:italic;transform:rotate(-9deg)">S</div>
<div class="abs" style="left:1204px;top:673px;width:16px;height:15px;line-height:15px;text-align:center;color:#1b7fe0;font-size:10.500px;font-weight:bold">中</div>
</body>
</html>
